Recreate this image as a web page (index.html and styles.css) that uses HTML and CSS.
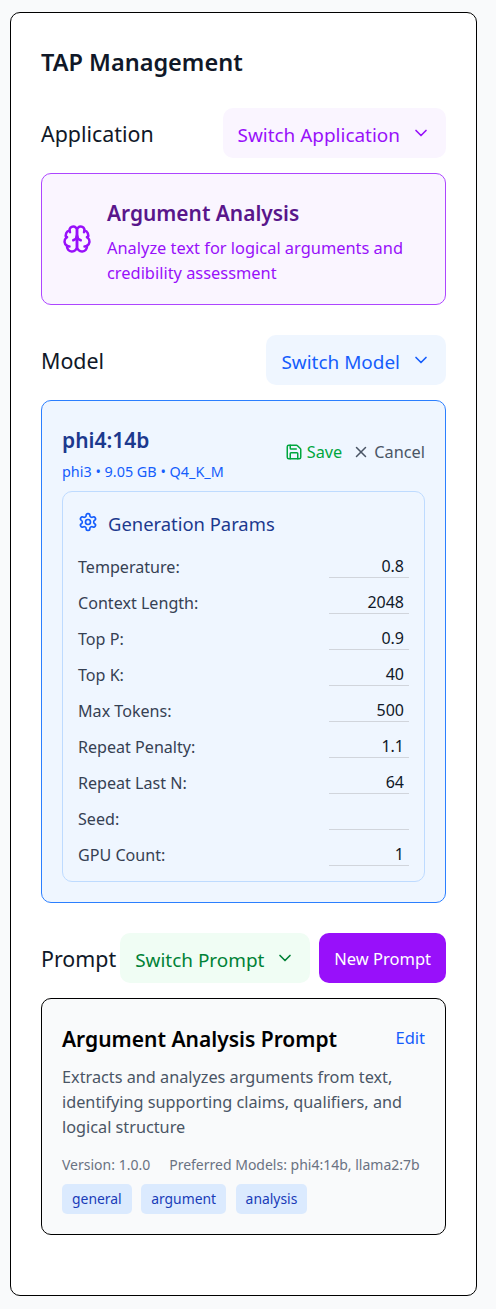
FILE: index.html
```html
<!DOCTYPE html>
<html lang="en">
<head>
  <meta charset="UTF-8">
  <title>TAP Management</title>
  <link rel="stylesheet" href="styles.css">
</head>
<body>
  <div class="panel">
    <h1>TAP Management</h1>

    <div class="row">
      <h2>Application</h2>
      <button class="switch switch-purple">Switch Application
        <svg class="chev" viewBox="0 0 24 24"><path d="m6 9 6 6 6-6"/></svg>
      </button>
    </div>
    <div class="app-card">
      <svg class="brain" viewBox="0 0 24 24">
        <path d="M12 5a3 3 0 1 0-5.997.125 4 4 0 0 0-2.526 5.77 4 4 0 0 0 .556 6.588A4 4 0 1 0 12 18Z"/>
        <path d="M12 5a3 3 0 1 1 5.997.125 4 4 0 0 1 2.526 5.77 4 4 0 0 1-.556 6.588A4 4 0 1 1 12 18Z"/>
        <path d="M15 13a4.5 4.5 0 0 1-3-4 4.5 4.5 0 0 1-3 4"/>
        <path d="M17.599 6.5a3 3 0 0 0 .399-1.375"/>
        <path d="M6.003 5.125A3 3 0 0 0 6.401 6.5"/>
        <path d="M3.477 10.896a4 4 0 0 1 .585-.396"/>
        <path d="M19.938 10.5a4 4 0 0 1 .585.396"/>
        <path d="M6 18a4 4 0 0 1-1.967-.516"/>
        <path d="M19.967 17.484A4 4 0 0 1 18 18"/>
      </svg>
      <div class="app-text">
        <h3>Argument Analysis</h3>
        <p>Analyze text for logical arguments and credibility assessment</p>
      </div>
    </div>

    <div class="row row-model">
      <h2>Model</h2>
      <button class="switch switch-blue">Switch Model
        <svg class="chev" viewBox="0 0 24 24"><path d="m6 9 6 6 6-6"/></svg>
      </button>
    </div>
    <div class="model-card">
      <div class="model-head">
        <div>
          <h3>phi4:14b</h3>
          <div class="model-meta">phi3 • 9.05 GB • Q4_K_M</div>
        </div>
        <div class="model-actions">
          <button class="act act-save">
            <svg viewBox="0 0 24 24"><path d="M15.2 3a2 2 0 0 1 1.4.6l3.8 3.8a2 2 0 0 1 .6 1.4V19a2 2 0 0 1-2 2H5a2 2 0 0 1-2-2V5a2 2 0 0 1 2-2z"/><path d="M17 21v-7a1 1 0 0 0-1-1H8a1 1 0 0 0-1 1v7"/><path d="M7 3v4a1 1 0 0 0 1 1h7"/></svg>
            Save
          </button>
          <button class="act act-cancel">
            <svg viewBox="0 0 24 24"><path d="M18 6 6 18"/><path d="m6 6 12 12"/></svg>
            Cancel
          </button>
        </div>
      </div>
      <div class="params">
        <div class="params-title">
          <svg viewBox="0 0 24 24"><path d="M12.22 2h-.44a2 2 0 0 0-2 2v.18a2 2 0 0 1-1 1.73l-.43.25a2 2 0 0 1-2 0l-.15-.08a2 2 0 0 0-2.73.73l-.22.38a2 2 0 0 0 .73 2.73l.15.1a2 2 0 0 1 1 1.72v.51a2 2 0 0 1-1 1.74l-.15.09a2 2 0 0 0-.73 2.73l.22.38a2 2 0 0 0 2.73.73l.15-.08a2 2 0 0 1 2 0l.43.25a2 2 0 0 1 1 1.73V20a2 2 0 0 0 2 2h.44a2 2 0 0 0 2-2v-.18a2 2 0 0 1 1-1.73l.43-.25a2 2 0 0 1 2 0l.15.08a2 2 0 0 0 2.73-.73l.22-.39a2 2 0 0 0-.73-2.73l-.15-.08a2 2 0 0 1-1-1.74v-.5a2 2 0 0 1 1-1.74l.15-.09a2 2 0 0 0 .73-2.73l-.22-.38a2 2 0 0 0-2.73-.73l-.15.08a2 2 0 0 1-2 0l-.43-.25a2 2 0 0 1-1-1.73V4a2 2 0 0 0-2-2z"/><circle cx="12" cy="12" r="3"/></svg>
          Generation Params
        </div>
        <div class="param"><span>Temperature:</span><input value="0.8"></div>
        <div class="param"><span>Context Length:</span><input value="2048"></div>
        <div class="param"><span>Top P:</span><input value="0.9"></div>
        <div class="param"><span>Top K:</span><input value="40"></div>
        <div class="param"><span>Max Tokens:</span><input value="500"></div>
        <div class="param"><span>Repeat Penalty:</span><input value="1.1"></div>
        <div class="param"><span>Repeat Last N:</span><input value="64"></div>
        <div class="param"><span>Seed:</span><input value=""></div>
        <div class="param"><span>GPU Count:</span><input value="1"></div>
      </div>
    </div>

    <div class="row row-prompt">
      <h2>Prompt</h2>
      <button class="switch switch-green">Switch Prompt
        <svg class="chev" viewBox="0 0 24 24"><path d="m6 9 6 6 6-6"/></svg>
      </button>
      <button class="new-prompt">New Prompt</button>
    </div>
    <div class="prompt-card">
      <div class="prompt-head">
        <h3>Argument Analysis Prompt</h3>
        <a class="edit">Edit</a>
      </div>
      <p class="prompt-desc">Extracts and analyzes arguments from text, identifying supporting claims, qualifiers, and logical structure</p>
      <div class="prompt-meta"><span>Version: 1.0.0</span><span>Preferred Models: phi4:14b, llama2:7b</span></div>
      <div class="tags">
        <span class="tag">general</span>
        <span class="tag">argument</span>
        <span class="tag">analysis</span>
      </div>
    </div>
  </div>
</body>
</html>
```

FILE: styles.css
```css
* {
  box-sizing: border-box;
}

body {
  margin: 0;
  padding: 12px 19px 13px 10px;
  background-color: #f9fafb;
  font-family: "Noto Sans", sans-serif;
  color: #101828;
}

svg {
  fill: none;
  stroke: currentColor;
  stroke-width: 2;
  stroke-linecap: round;
  stroke-linejoin: round;
  flex-shrink: 0;
}

button {
  font-family: inherit;
  border: none;
  cursor: pointer;
}

h1, h2, h3, p {
  margin: 0;
}

.panel {
  height: 1284px;
  padding: 30px;
  background-color: #fff;
  border: 1px solid #000;
  border-radius: 10px;
}

h1 {
  font-size: 23.5px;
  line-height: 38px;
  font-weight: 600;
}

.row {
  display: flex;
  align-items: center;
  justify-content: space-between;
  margin-top: 27px;
  margin-bottom: 15px;
}

.row h2 {
  padding-top: 2px;
  font-size: 21.4px;
  line-height: 32px;
  font-weight: 400;
}

.switch {
  display: flex;
  align-items: center;
  flex-shrink: 0;
  gap: 11px;
  height: 50px;
  padding: 3px 15px 0;
  font-size: 18.95px;
  white-space: nowrap;
  border-radius: 10px;
}

.chev {
  width: 20px;
  height: 20px;
  margin-top: -4px;
}

.switch-purple { background-color: #faf5ff; color: #9810fa; }
.switch-blue { background-color: #eff6ff; color: #155dfc; }
.switch-green { background-color: #f0fdf4; color: #008236; }

.app-card {
  display: flex;
  align-items: center;
  gap: 15px;
  height: 132px;
  padding: 0 20px;
  background-color: #faf5ff;
  border: 1px solid #ad46ff;
  border-radius: 10px;
}

.brain {
  width: 30px;
  height: 30px;
  color: #9810fa;
}

.app-text {
  padding-top: 6px;
}

.app-card h3 {
  font-size: 20.9px;
  line-height: 28px;
  font-weight: 600;
  color: #59168b;
}

.app-card p {
  margin-top: 8px;
  font-size: 16.4px;
  line-height: 25px;
  color: #9810fa;
}

.row-model {
  margin-top: 30px;
}

.model-card {
  padding: 20px;
  background-color: #eff6ff;
  border: 1px solid #2b7fff;
  border-radius: 10px;
}

.model-head {
  display: flex;
  justify-content: space-between;
  align-items: center;
  margin-bottom: 8px;
}

.model-head h3 {
  font-size: 21px;
  line-height: 38px;
  font-weight: 600;
  color: #1c398e;
}

.model-meta {
  padding-top: 2px;
  font-size: 14.4px;
  line-height: 22px;
  color: #155dfc;
}

.model-actions {
  display: flex;
  gap: 10px;
}

.act {
  display: flex;
  align-items: center;
  gap: 4px;
  padding: 0;
  background: none;
  font-size: 16.3px;
}

.act svg {
  width: 18px;
  height: 18px;
}

.act-save { color: #00a63e; }
.act-cancel { color: #4a5565; }

.params {
  padding: 16px 15px 10px;
  background-color: #eff6ff;
  border: 1px solid #bedbff;
  border-radius: 10px;
}

.params-title {
  display: flex;
  align-items: center;
  gap: 10px;
  margin-bottom: 7px;
  font-size: 18.4px;
  line-height: 32px;
  color: #1c398e;
}

.params-title svg {
  width: 20px;
  height: 20px;
  margin-top: -4px;
  color: #155dfc;
}

.param {
  display: flex;
  justify-content: space-between;
  height: 36px;
  font-size: 16.1px;
  color: #364153;
}

.param span {
  padding-top: 4px;
  line-height: 32px;
}

.param input {
  width: 80px;
  height: 28px;
  margin-top: 3px;
  padding: 4px 5px 0;
  text-align: right;
  font-family: inherit;
  font-size: 16px;
  color: #101828;
  background: transparent;
  border: none;
  border-bottom: 1px solid #d1d5dc;
  outline: none;
}

.row-prompt {
  margin-top: 30px;
}

.row-prompt .switch {
  margin-left: 4px;
  margin-right: auto;
}

.new-prompt {
  height: 50px;
  padding: 0 15px;
  flex-shrink: 0;
  font-size: 16.5px;
  color: #fff;
  background-color: #9810fa;
  border-radius: 10px;
}

.prompt-card {
  padding: 20px;
  background-color: #f9fafb;
  border: 1px solid #000;
  border-radius: 10px;
}

.prompt-head {
  display: flex;
  justify-content: space-between;
  align-items: center;
}

.prompt-head h3 {
  font-size: 21px;
  line-height: 40px;
  font-weight: 600;
  color: #000;
}

.edit {
  margin-top: -3px;
  font-size: 16.5px;
  color: #155dfc;
}

.prompt-desc {
  margin-top: 6px;
  font-size: 16.25px;
  line-height: 25px;
  color: #4a5565;
}

.prompt-meta {
  display: flex;
  gap: 19px;
  margin-top: 14px;
  font-size: 14px;
  line-height: 22px;
  color: #6a7282;
}

.tags {
  display: flex;
  gap: 9.5px;
  margin-top: 8px;
}

.tag {
  padding: 0 10px;
  font-size: 13.9px;
  line-height: 30px;
  color: #193cb8;
  background-color: #dbeafe;
  border-radius: 5px;
}
```
